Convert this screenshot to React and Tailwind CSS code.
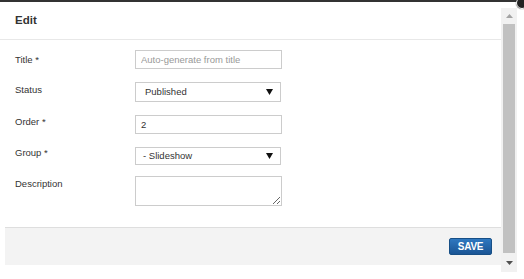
import React from 'react';

const font = { fontFamily: '"Liberation Sans", Arial, sans-serif' };

const Caret = () => (
  <svg width="7" height="6" viewBox="0 0 7 6" className="shrink-0">
    <path d="M0 0 H7 L3.5 6 Z" fill="#111" />
  </svg>
);

const Row = ({ label, labelPad, children }) => (
  <div className="flex items-start">
    <div className={`w-[135px] pl-[15px] text-[9.5px] leading-[12px] text-[#333] ${labelPad}`}>
      {label}
    </div>
    {children}
  </div>
);

const Scrollbar = () => (
  <div className="w-[16px] mt-[6px] h-[264px] bg-[#f1f1f1] flex flex-col items-center">
    <div className="h-[16px] w-full flex items-center justify-center">
      <svg width="7" height="4" viewBox="0 0 7 4">
        <path d="M0 4 L3.5 0 L7 4 Z" fill="#a3a3a3" />
      </svg>
    </div>
    <div className="w-[12px] h-[229px] bg-[#c1c1c1]" />
    <div className="flex-1 w-full flex items-center justify-center">
      <svg width="7" height="4" viewBox="0 0 7 4">
        <path d="M0 0 L7 0 L3.5 4 Z" fill="#505050" />
      </svg>
    </div>
  </div>
);

export default function App() {
  return (
    <div className="relative w-[524px] h-[279px] overflow-hidden bg-white" style={font}>
      <div className="h-[2px] bg-[#333]" />

      <div className="flex">
        <div className="w-[501px] flex flex-col">
          <div className="h-[38px] border-b border-[#e8e8e8] flex items-center pl-[15px]">
            <h2 className="text-[11.5px] font-bold text-[#333]">Edit</h2>
          </div>

          <div className="flex flex-col pt-[10px]">
            <Row label="Title *" labelPad="pt-[4px]">
              <input
                placeholder="Auto-generate from title"
                className="w-[147px] h-[19px] border border-[#ccc] px-[5px] text-[9.5px] text-[#333] placeholder:text-[#999] outline-none"
              />
            </Row>

            <div className="mt-[13px]">
              <Row label="Status" labelPad="pt-[2px]">
                <div className="w-[146px] h-[20px] border border-[#ccc] flex items-center justify-between pl-[9px] pr-[7px] text-[9.5px] text-[#333]">
                  <span>Published</span>
                  <Caret />
                </div>
              </Row>
            </div>

            <div className="mt-[13px]">
              <Row label="Order *" labelPad="pt-[1px]">
                <input
                  defaultValue="2"
                  className="w-[147px] h-[19px] border border-[#ccc] px-[5px] text-[9.5px] text-[#333] outline-none"
                />
              </Row>
            </div>

            <div className="mt-[13px]">
              <Row label="Group *" labelPad="pt-0">
                <div className="w-[146px] h-[18px] border border-[#ccc] flex items-center justify-between pl-[7px] pr-[7px] text-[9.5px] text-[#333]">
                  <span>- Slideshow</span>
                  <Caret />
                </div>
              </Row>
            </div>

            <div className="mt-[11px]">
              <Row label="Description" labelPad="pt-[2px]">
                <textarea className="block w-[147px] h-[30px] border border-[#ccc] resize outline-none" />
              </Row>
            </div>
          </div>

          <div className="mt-[21px] ml-[5px] h-[38px] border-t border-[#dedede] bg-[#f3f3f3] flex items-center justify-end pr-[9px]">
            <button className="w-[43px] h-[17px] rounded-[2px] border border-[#174f86] bg-gradient-to-b from-[#2f78c0] to-[#1a5595] text-white text-[10px] font-bold tracking-[-0.3px] leading-none">
              SAVE
            </button>
          </div>
        </div>

        <Scrollbar />
      </div>

      <div className="absolute -top-[3px] right-[-4px] w-[12px] h-[12px] rounded-full bg-[#222] border border-white shadow-[0_0_1px_#000]" />
    </div>
  );
}
